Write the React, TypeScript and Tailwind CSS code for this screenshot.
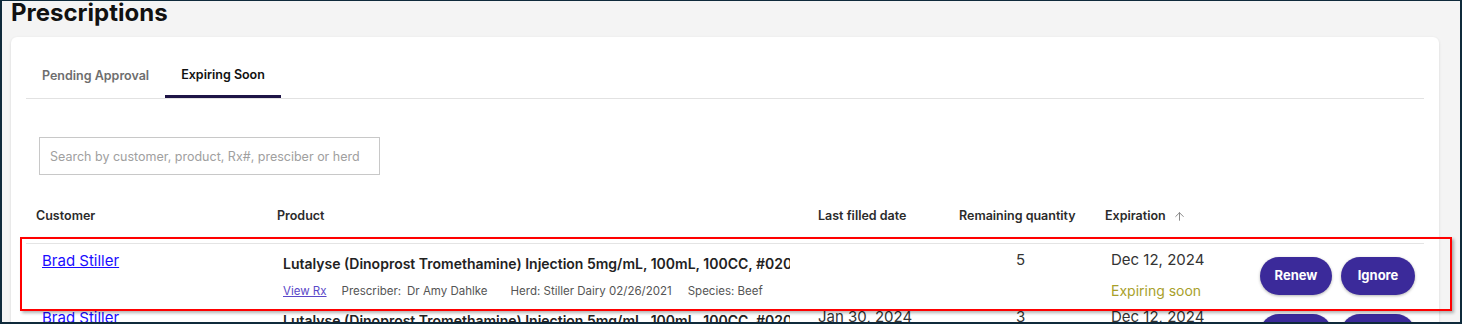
import { ArrowUp } from "lucide-react";

interface RxRow {
  id: number;
  customer: string;
  product: string;
  prescriber: string;
  herd: string;
  species: string;
  lastFilled: string;
  remaining: number;
  expiration: string;
}

const rows: RxRow[] = [
  {
    id: 1,
    customer: "Brad Stiller",
    product:
      "Lutalyse (Dinoprost Tromethamine) Injection 5mg/mL, 100mL, 100CC, #020304",
    prescriber: "Dr Amy Dahlke",
    herd: "Stiller Dairy 02/26/2021",
    species: "Beef",
    lastFilled: "",
    remaining: 5,
    expiration: "Dec 12, 2024",
  },
  {
    id: 2,
    customer: "Brad Stiller",
    product:
      "Lutalyse (Dinoprost Tromethamine) Injection 5mg/mL, 100mL, 100CC, #020304",
    prescriber: "Dr Amy Dahlke",
    herd: "Stiller Dairy 02/26/2021",
    species: "Beef",
    lastFilled: "Jan 30, 2024",
    remaining: 3,
    expiration: "Dec 12, 2024",
  },
];

function HeaderRow() {
  return (
    <div className="mt-[21px] flex border-b border-[#e4e4e4] pt-[12px] pb-[19px] text-[12.5px] font-semibold leading-[16px] text-[#2b2b2b]">
      <div className="w-[241px] pl-[10px]">Customer</div>
      <div className="w-[541px] pl-[10px]">Product</div>
      <div className="w-[141px] pl-[10px]">Last filled date</div>
      <div className="w-[146px] pl-[10px]">Remaining quantity</div>
      <div className="flex w-[150px] items-center pl-[10px]">
        Expiration
        <ArrowUp className="ml-[7px] h-[13px] w-[13px] text-[#777]" strokeWidth={1.6} />
      </div>
    </div>
  );
}

function PrescriptionRow({ row }: { row: RxRow }) {
  return (
    <div className="flex h-[57px] items-start">
      <div className="w-[241px] pl-[16px] pt-[4px]">
        <a className="text-[15px] leading-[20px] text-[#1a0dff] underline">
          {row.customer}
        </a>
      </div>

      <div className="w-[541px] pl-[16px] pt-[10px]">
        <div className="w-[507px] overflow-hidden whitespace-nowrap text-[14px] font-semibold leading-[20px] text-[#222]">
          {row.product}
        </div>
        <div className="mt-[9px] flex whitespace-nowrap text-[11.5px] leading-[16px] text-[#555]">
          <a className="text-[#5b48c8] underline">View Rx</a>
          <span className="ml-[15px]">Prescriber:</span>
          <span className="ml-[6px]">{row.prescriber}</span>
          <span className="ml-[23px]">Herd: {row.herd}</span>
          <span className="ml-[16px]">Species: {row.species}</span>
        </div>
      </div>

      <div className="w-[141px] pl-[10px] pt-[6px] text-[15px] leading-[20px] text-[#333]">
        {row.lastFilled}
      </div>

      <div className="w-[146px] pl-[67px] pt-[6px] text-[15px] leading-[20px] text-[#333]">
        {row.remaining}
      </div>

      <div className="w-[150px] pl-[16px] pt-[6px]">
        <div className="text-[15px] leading-[20px] text-[#333]">{row.expiration}</div>
        <div className="mt-[11px] text-[14px] leading-[20px] text-[#a89f2b]">
          Expiring soon
        </div>
      </div>

      <div className="flex flex-1 justify-end gap-[9px] pr-[9px] pt-[13px]">
        <button className="h-[38px] w-[72px] rounded-full bg-[#3b2a9a] text-[13px] font-bold text-white shadow-[0_1px_3px_rgba(0,0,0,0.3)]">
          Renew
        </button>
        <button className="h-[38px] w-[74px] rounded-full bg-[#3b2a9a] text-[13px] font-bold text-white shadow-[0_1px_3px_rgba(0,0,0,0.3)]">
          Ignore
        </button>
      </div>
    </div>
  );
}

export default function App() {
  return (
    <div className="relative h-[324px] w-[1462px] overflow-hidden border-t border-r-2 border-b-2 border-l-2 border-[#0f2a3b] bg-[#f4f4f4] font-['Inter',sans-serif]">
      <h1 className="ml-[9px] text-[24px] font-bold leading-none text-[#111]">
        Prescriptions
      </h1>

      <div className="mt-[12px] ml-[9px] w-[1428px] rounded-md bg-white px-[15px] pt-[16px] shadow-[0_1px_3px_rgba(0,0,0,0.12)]">
        {/* Tabs */}
        <div className="flex border-b border-[#e2e2e2] text-[12.5px] font-semibold leading-[16px]">
          <div className="border-b-[3px] border-transparent px-[16px] pt-[15px] pb-[11px] text-[#6e6e6e]">
            Pending Approval
          </div>
          <div className="border-b-[3px] border-[#1e1446] px-[16px] pt-[14px] pb-[12px] text-[#111]">
            Expiring Soon
          </div>
        </div>

        {/* Search */}
        <div className="pt-[38px] pl-[13px]">
          <input
            className="h-[38px] w-[341px] border border-[#c8c8c8] px-[10px] text-[12.5px] text-[#333] outline-none placeholder:text-[#a0a0a0]"
            placeholder="Search by customer, product, Rx#, presciber or herd"
          />
        </div>

        <HeaderRow />
        {rows.map((row) => (
          <PrescriptionRow key={row.id} row={row} />
        ))}
      </div>

      {/* Highlight annotation */}
      <div className="absolute top-[236px] left-[18px] h-[74px] w-[1432px] border-2 border-[#ff0000] shadow-[2px_2px_3px_rgba(0,0,0,0.3)]" />
    </div>
  );
}
